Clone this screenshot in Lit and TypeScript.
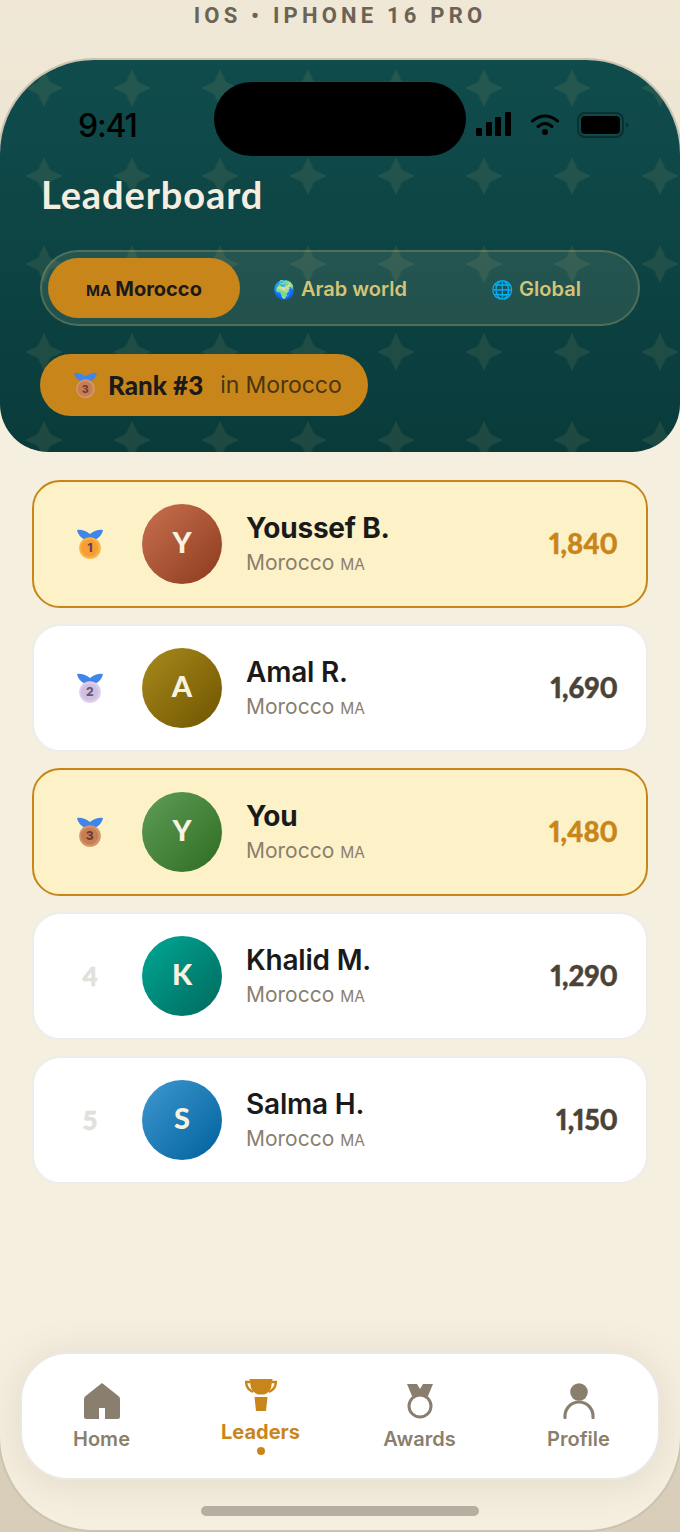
import { LitElement, html, css, svg } from "lit";
import { customElement } from "lit/decorators.js";

const ROWS = [
  { rank: 1, name: "Youssef B.", score: "1,840", letter: "Y", grad: "linear-gradient(135deg,#c9714f,#8b3a1e)", hi: true, weight: 700 },
  { rank: 2, name: "Amal R.", score: "1,690", letter: "A", grad: "linear-gradient(135deg,#a88a1c,#6f5400)", hi: false, weight: 600 },
  { rank: 3, name: "You", score: "1,480", letter: "Y", grad: "linear-gradient(135deg,#5f9e58,#2f6b22)", hi: true, weight: 700 },
  { rank: 4, name: "Khalid M.", score: "1,290", letter: "K", grad: "linear-gradient(135deg,#00a896,#00695c)", hi: false, weight: 600 },
  { rank: 5, name: "Salma H.", score: "1,150", letter: "S", grad: "linear-gradient(135deg,#3f98d0,#00609c)", hi: false, weight: 600 },
];

const COINS: Record<number, { edge: string; face: string; digit: string }> = {
  1: { edge: "#fbb040", face: "#f59e35", digit: "#6b3a5a" },
  2: { edge: "#dccdee", face: "#cfc0e2", digit: "#675878" },
  3: { edge: "#d69268", face: "#c67f52", digit: "#6b3a3a" },
};

const homeIcon = svg`<path d="M18 0 L35 13.5 Q36 14.5 36 16 V33.5 Q36 36 33.5 36 H21 V25 H15 V36 H2.5 Q0 36 0 33.5 V16 Q0 14.5 1 13.5 Z" fill="currentColor"/>`;
const trophyIcon = svg`
  <path d="M4.5 0 H27.5 L26 9 Q24 14 19 15.5 H13 Q8 14 6 9 Z" fill="currentColor"/>
  <path d="M5 3 H1.2 Q1 10 8 13 M27 3 H30.8 Q31 10 24 13" fill="none" stroke="currentColor" stroke-width="2.4"/>
  <path d="M9.5 18 H22.5 L21 32 H11 Z" fill="currentColor"/>`;
const medalIcon = svg`
  <path d="M0 0 H10 L13 5 L16 0 H26 L21 12 H5 Z" fill="currentColor"/>
  <circle cx="13" cy="22" r="11" fill="none" stroke="currentColor" stroke-width="3"/>`;
const personIcon = svg`
  <circle cx="16" cy="9" r="8.8" fill="currentColor"/>
  <path d="M2 34.5 V33 A14 14 0 0 1 30 33 V34.5" fill="none" stroke="currentColor" stroke-width="3.2" stroke-linecap="round"/>`;

const TABS = [
  { label: "Home", icon: homeIcon, w: 36, h: 36, active: false },
  { label: "Leaders", icon: trophyIcon, w: 32, h: 33, active: true },
  { label: "Awards", icon: medalIcon, w: 26, h: 35, active: false },
  { label: "Profile", icon: personIcon, w: 32, h: 36, active: false },
];

function medal(n: number, w = 26) {
  const c = COINS[n];
  return html`
    <svg class="medal" width=${w} height=${(w * 30) / 26} viewBox="0 0 26 30" aria-hidden="true">
      <path d="M0 1 Q6 0 13 5 Q20 0 26 1 Q25 7 18 11 H8 Q1 7 0 1 Z" fill="#4285e8"/>
      <circle cx="13" cy="19" r="10.8" fill=${c.edge}/>
      <circle cx="12.6" cy="19" r="8.6" fill=${c.face}/>
      <text x="12.8" y="23.4" text-anchor="middle" font-family="Inter, sans-serif" font-size="12" font-weight="800" fill=${c.digit}>${n}</text>
    </svg>
  `;
}

@customElement("app-root")
export class AppRoot extends LitElement {
  static styles = css`
    :host {
      display: block;
      width: 680px;
      height: 1532px;
      overflow: hidden;
      font-family: "Inter", sans-serif;
      background: linear-gradient(180deg, #f0e8d6 0%, #e6dcc8 50%, #d8cdb8 100%);
    }
    .device-label {
      height: 58px;
      padding-top: 3px;
      box-sizing: border-box;
      text-align: center;
      font-family: "Roboto", sans-serif;
      font-size: 22px;
      line-height: 26px;
      font-weight: 700;
      letter-spacing: 4.2px;
      color: #6b6355;
    }
    /* the frame's side borders sit just outside the window */
    .phone {
      position: relative;
      width: 684px;
      height: 1474px;
      margin-left: -2px;
      box-sizing: border-box;
      display: flex;
      flex-direction: column;
      background: #f5efe0;
      border: 2px solid #cbc2b0;
      border-radius: 96px;
      overflow: hidden;
    }
    .header {
      position: relative;
      flex: none;
      height: 392px;
      box-sizing: border-box;
      padding: 0 40px;
      background: linear-gradient(180deg, #104c4c 0%, #0a3b3b 100%);
      border-radius: 0 0 48px 48px;
      overflow: hidden;
    }
    .stars {
      position: absolute;
      inset: 0;
      width: 100%;
      height: 100%;
    }
    .island {
      position: absolute;
      left: 214px;
      top: 22px;
      width: 252px;
      height: 74px;
      border-radius: 37px;
      background: #000;
    }
    .status {
      position: relative;
      height: 112px;
      display: flex;
      justify-content: space-between;
      box-sizing: border-box;
      padding: 44px 11px 0 38px;
    }
    .time {
      font-size: 32px;
      line-height: 44px;
      font-weight: 500;
      letter-spacing: -1.2px;
      color: #000;
    }
    .status-icons {
      display: flex;
      gap: 20px;
      padding-top: 8px;
      height: 28px;
    }
    h1 {
      position: relative;
      margin: -1px 0 -1px 1px;
      font-family: "Lato", sans-serif;
      font-size: 38px;
      line-height: 46px;
      font-weight: 700;
      letter-spacing: 0.9px;
      color: #f5eee0;
    }
    .segments {
      position: relative;
      margin-top: 34px;
      height: 76px;
      box-sizing: border-box;
      padding: 6px;
      display: flex;
      gap: 4px;
      border: 2px solid rgba(212, 196, 120, 0.25);
      border-radius: 38px;
      background: rgba(245, 235, 190, 0.1);
    }
    .segment {
      flex: 1;
      box-sizing: border-box;
      padding-top: 2px;
      display: flex;
      align-items: center;
      justify-content: center;
      gap: 6px;
      border-radius: 30px;
      font-size: 20px;
      font-weight: 600;
      color: #d4c478;
    }
    .segment .emoji {
      font-size: 18px;
    }
    .segment.on {
      gap: 4px;
      background: #c8861a;
      color: #1a1a1a;
      font-weight: 700;
    }
    .segment .cc {
      font-size: 15px;
      margin-top: 2px;
    }
    .rank-pill {
      position: relative;
      margin-top: 28px;
      width: 328px;
      height: 62px;
      box-sizing: border-box;
      padding-left: 34px;
      display: flex;
      align-items: center;
      gap: 11px;
      border-radius: 31px;
      background: #c8861a;
      font-size: 23px;
      letter-spacing: -0.1px;
      color: #4a3410;
    }
    .rank-pill b {
      margin-right: 6px;
      font-family: "Lato", sans-serif;
      font-size: 26px;
      font-weight: 900;
      letter-spacing: 0;
      color: #1a1a1a;
    }
    .medal {
      display: block;
      flex: none;
    }
    .list {
      flex: none;
      display: flex;
      flex-direction: column;
      gap: 16px;
      padding: 28px 32px 0;
    }
    .row {
      height: 128px;
      box-sizing: border-box;
      display: flex;
      align-items: center;
      gap: 24px;
      padding: 0 28px;
      border: 2px solid #eeecea;
      border-radius: 28px;
      background: #fff;
    }
    .row.hi {
      border-color: #c8861a;
      background: #fdf1c7;
    }
    .rank {
      width: 56px;
      flex: none;
      display: flex;
      justify-content: center;
      font-family: "Lato", sans-serif;
      font-size: 26px;
      font-weight: 900;
      -webkit-text-stroke: 0.5px currentColor;
      color: #e2e0dc;
    }
    .avatar {
      width: 80px;
      height: 80px;
      flex: none;
      box-sizing: border-box;
      padding-bottom: 5px;
      display: flex;
      align-items: center;
      justify-content: center;
      border-radius: 50%;
      font-family: "Lato", sans-serif;
      font-size: 29px;
      font-weight: 900;
      color: #f9f2e0;
    }
    .who {
      flex: 1;
      min-width: 0;
      padding-top: 2px;
    }
    .name {
      font-size: 28px;
      line-height: 34px;
      letter-spacing: -0.2px;
      color: #1a1a1a;
    }
    .where {
      margin-top: 4px;
      font-size: 21px;
      line-height: 28px;
      color: #8a7f6e;
    }
    .where .cc {
      font-size: 15.5px;
    }
    .score {
      margin-top: -2px;
      font-family: "Lato", sans-serif;
      font-size: 27.5px;
      font-weight: 900;
      font-variant-numeric: proportional-nums;
      -webkit-text-stroke: 0.4px currentColor;
      color: #4a4438;
    }
    .hi .score {
      color: #c8861a;
    }
    .tabbar {
      margin: auto 20px 0;
      height: 128px;
      flex: none;
      box-sizing: border-box;
      padding-top: 2px;
      display: flex;
      border: 2px solid #ebe8e4;
      border-radius: 48px;
      background: #fff;
      box-shadow: 0 4px 40px rgba(110, 85, 40, 0.14);
    }
    .tab {
      flex: 1;
      display: flex;
      flex-direction: column;
      align-items: center;
      justify-content: center;
      gap: 8px;
      font-size: 20px;
      line-height: 24px;
      font-weight: 600;
      color: #8a7f6e;
    }
    .tab.on {
      color: #c8861a;
      font-weight: 700;
    }
    .dot {
      width: 8px;
      height: 8px;
      margin-top: -5px;
      border-radius: 50%;
      background: #c8861a;
    }
    .home-bar {
      flex: none;
      width: 278px;
      height: 10px;
      margin: 26px auto 14px;
      border-radius: 5px;
      background: #b5afa2;
    }
  `;

  private renderStatusIcons() {
    return html`
      <div class="status-icons">
        <svg width="35" height="24" viewBox="0 0 35 24">
          <rect x="0" y="16" width="6" height="8" rx="1"/>
          <rect x="10" y="10" width="6" height="14" rx="1"/>
          <rect x="19" y="5" width="6" height="19" rx="1"/>
          <rect x="29" y="0" width="6" height="24" rx="1"/>
        </svg>
        <svg width="28" height="24" viewBox="0 0 28 24" fill="none" stroke="#000" stroke-width="3" stroke-linecap="round">
          <path d="M1.5 9 Q14 -1 26.5 9"/>
          <path d="M7 14.5 Q14 8.5 21 14.5"/>
          <circle cx="14" cy="20" r="3" fill="#000" stroke="none"/>
        </svg>
        <svg width="52" height="26" viewBox="0 0 52 26" style="margin-left:-2px">
          <rect x="1" y="1" width="45" height="24" rx="7" fill="none" stroke="#0a3030" stroke-width="2"/>
          <rect x="4" y="4" width="39" height="18" rx="4" fill="#000"/>
          <path d="M49 10 L52 13 L49 16 Z" fill="#0a3030"/>
        </svg>
      </div>
    `;
  }

  protected render() {
    return html`
      <div class="device-label">IOS • IPHONE 16 PRO</div>
      <div class="phone">
        <div class="header">
          <svg class="stars" aria-hidden="true">
            <defs>
              <pattern id="star" width="88" height="88" patternUnits="userSpaceOnUse" patternTransform="translate(0 -16)">
                <path transform="translate(44 44)" d="M0 -19 L6 -6 L19 0 L6 6 L0 19 L-6 6 L-19 0 L-6 -6 Z" fill="rgba(200,185,125,0.105)"/>
              </pattern>
            </defs>
            <rect width="100%" height="100%" fill="url(#star)"/>
          </svg>
          <div class="status">
            <span class="time">9:41</span>
            ${this.renderStatusIcons()}
          </div>
          <div class="island"></div>
          <h1>Leaderboard</h1>
          <div class="segments">
            <div class="segment on"><span class="cc">MA</span><span>Morocco</span></div>
            <div class="segment"><span class="emoji">\u{1F30D}</span><span>Arab world</span></div>
            <div class="segment"><span class="emoji">\u{1F310}</span><span>Global</span></div>
          </div>
          <div class="rank-pill">
            ${medal(3, 23)}
            <b>Rank #3</b>
            <span>in Morocco</span>
          </div>
        </div>
        <div class="list">
          ${ROWS.map(
            (r) => html`
              <div class="row ${r.hi ? "hi" : ""}">
                <div class="rank">${r.rank <= 3 ? medal(r.rank) : r.rank}</div>
                <div class="avatar" style="background:${r.grad}">${r.letter}</div>
                <div class="who">
                  <div class="name" style="font-weight:${r.weight}">${r.name}</div>
                  <div class="where">Morocco <span class="cc">MA</span></div>
                </div>
                <div class="score">${r.score}</div>
              </div>
            `,
          )}
        </div>
        <div class="tabbar">
          ${TABS.map(
            (t) => html`
              <div class="tab ${t.active ? "on" : ""}">
                <svg width=${t.w} height=${t.h} viewBox="0 0 ${t.w} ${t.h}">${t.icon}</svg>
                <span>${t.label}</span>
                ${t.active ? html`<span class="dot"></span>` : ""}
              </div>
            `,
          )}
        </div>
        <div class="home-bar"></div>
      </div>
    `;
  }
}
